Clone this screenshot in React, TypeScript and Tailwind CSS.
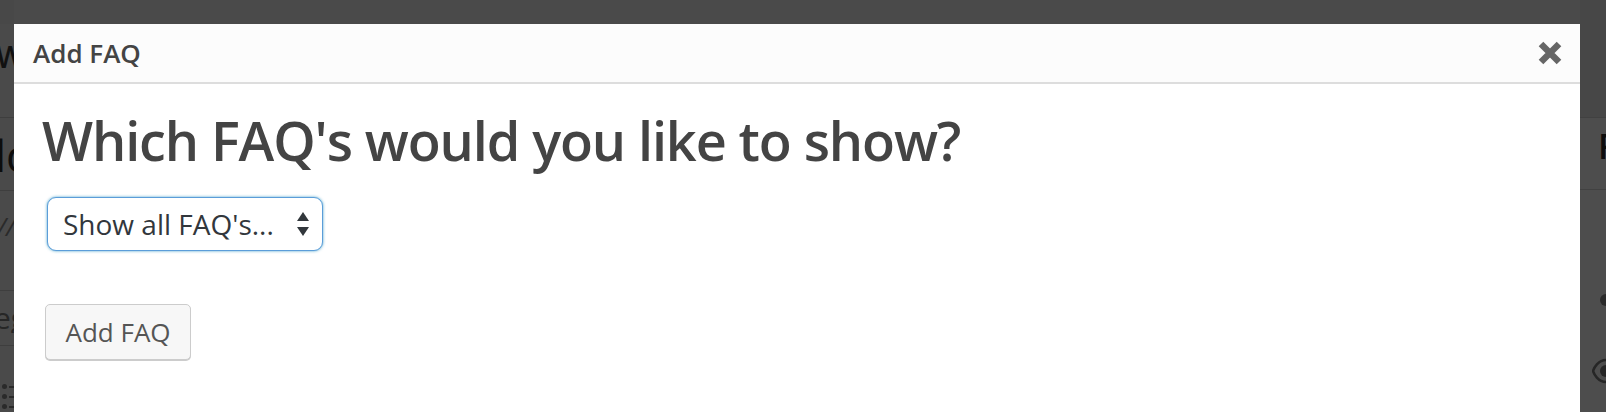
import React from "react";

const font = { fontFamily: '"Open Sans", "Noto Sans", sans-serif' };

function LeftStrip() {
  return (
    <div className="w-[14px] h-full flex flex-col overflow-hidden bg-[#4a4a4a] shrink-0" style={font}>
      <div className="h-[24px] bg-[#484848] shrink-0" />
      <div className="h-[93px] shrink-0 overflow-hidden">
        <span className="block w-[14px] overflow-hidden text-[30px] leading-none text-[#111] font-semibold mt-[18px] whitespace-nowrap">
          <span className="ml-[-4px]">W</span>
        </span>
      </div>
      <div className="h-px bg-[#3e3e3e] shrink-0" />
      <div className="h-[72px] shrink-0 overflow-hidden">
        <span className="block w-[14px] overflow-hidden text-[44px] leading-none text-[#0d0d0d] mt-[15px] whitespace-nowrap">
          <span className="inline-block ml-[-5px]">ld</span>
        </span>
      </div>
      <div className="h-px bg-[#3e3e3e] shrink-0" />
      <div className="h-[99px] shrink-0 overflow-hidden">
        <span className="block w-[14px] overflow-hidden text-[26px] leading-none text-[#2a2a2a] italic mt-[22px] whitespace-nowrap">
          <span className="inline-block ml-[-3px]">//</span>
        </span>
      </div>
      <div className="h-px bg-[#3e3e3e] shrink-0" />
      <div className="h-[54px] shrink-0 overflow-hidden">
        <span className="block w-[14px] overflow-hidden text-[30px] leading-none text-[#262626] mt-[12px] whitespace-nowrap">
          <span className="inline-block ml-[-6px]">eg</span>
        </span>
      </div>
      <div className="h-px bg-[#3e3e3e] shrink-0" />
      <div className="flex-1 flex flex-col gap-[5px] pt-[38px] pl-[2px]">
        {[0, 1, 2].map((i) => (
          <div key={i} className="flex items-center gap-[2px]">
            <div className="w-[5px] h-[5px] rounded-full bg-[#2a2a2a]" />
            <div className="w-[6px] h-[2px] bg-[#2a2a2a]" />
          </div>
        ))}
      </div>
    </div>
  );
}

function RightStrip() {
  return (
    <div className="w-[26px] h-full flex flex-col overflow-hidden bg-[#4d4d4d] shrink-0" style={font}>
      <div className="h-[117px] bg-[#474747] shrink-0" />
      <div className="h-px bg-[#414141] shrink-0" />
      <div className="h-[71px] shrink-0 overflow-hidden">
        <span className="block w-[26px] overflow-hidden text-[34px] leading-none text-[#0d0d0d] font-semibold mt-[11px] whitespace-nowrap">
          <span className="inline-block ml-[18px]">F</span>
        </span>
      </div>
      <div className="h-px bg-[#414141] shrink-0" />
      <div className="flex-1 flex flex-col items-end pt-[104px]">
        <div className="w-[6px] h-[12px] rounded-l-full bg-[#2b2b2b]" />
        <svg width="14" height="30" viewBox="0 0 14 30" className="mt-[50px]">
          <path d="M14 4 C6 4 2 12 1 15 C2 18 6 26 14 26" fill="none" stroke="#262626" strokeWidth="2.5" />
          <circle cx="14" cy="15" r="6" fill="#262626" />
        </svg>
      </div>
    </div>
  );
}

function CloseIcon() {
  return (
    <svg width="26" height="26" viewBox="0 0 26 26">
      <path d="M4 4 L22 22 M22 4 L4 22" stroke="#666" strokeWidth="6.5" strokeLinecap="butt" />
    </svg>
  );
}

function SelectArrows() {
  return (
    <svg width="12" height="24" viewBox="0 0 12 24">
      <path d="M6 0 L12 9 L0 9 Z" fill="#32373c" />
      <path d="M0 15 L12 15 L6 24 Z" fill="#32373c" />
    </svg>
  );
}

function Modal() {
  return (
    <div className="flex-1 mt-[24px] flex flex-col bg-white min-w-0" style={font}>
      <div className="h-[58px] bg-[#fcfcfc] flex items-center justify-between pl-[19px] pr-[17px] shrink-0">
        <span className="text-[26px] font-semibold text-[#444] leading-none">Add FAQ</span>
        <CloseIcon />
      </div>
      <div className="h-[2px] bg-[#dddddd] shrink-0" />
      <div className="flex-1 pl-[28px] pt-[29px] flex flex-col items-start">
        <h1 className="text-[54px] leading-none font-semibold text-[#444] whitespace-nowrap tracking-[-1.1px]">
          Which FAQ's would you like to show?
        </h1>
        <div className="mt-[30px] ml-[5px] w-[276px] h-[54px] rounded-[9px] border border-[#5b9dd9] shadow-[0_0_3px_rgba(30,140,190,0.8)] flex items-center justify-between pl-[15px] pr-[13px] bg-white">
          <span className="text-[28px] text-[#32373c] leading-none whitespace-nowrap">Show all FAQ's...</span>
          <SelectArrows />
        </div>
        <button className="mt-[53px] ml-[3px] w-[146px] h-[56px] rounded-[5px] border border-[#cccccc] bg-[#f7f7f7] shadow-[0_1px_0_#cccccc] flex items-center justify-center text-[26px] text-[#555] leading-none">
          Add FAQ
        </button>
      </div>
    </div>
  );
}

export default function App() {
  return (
    <div className="w-[1606px] h-[412px] overflow-hidden flex bg-[#4a4a4a]">
      <LeftStrip />
      <Modal />
      <RightStrip />
    </div>
  );
}
